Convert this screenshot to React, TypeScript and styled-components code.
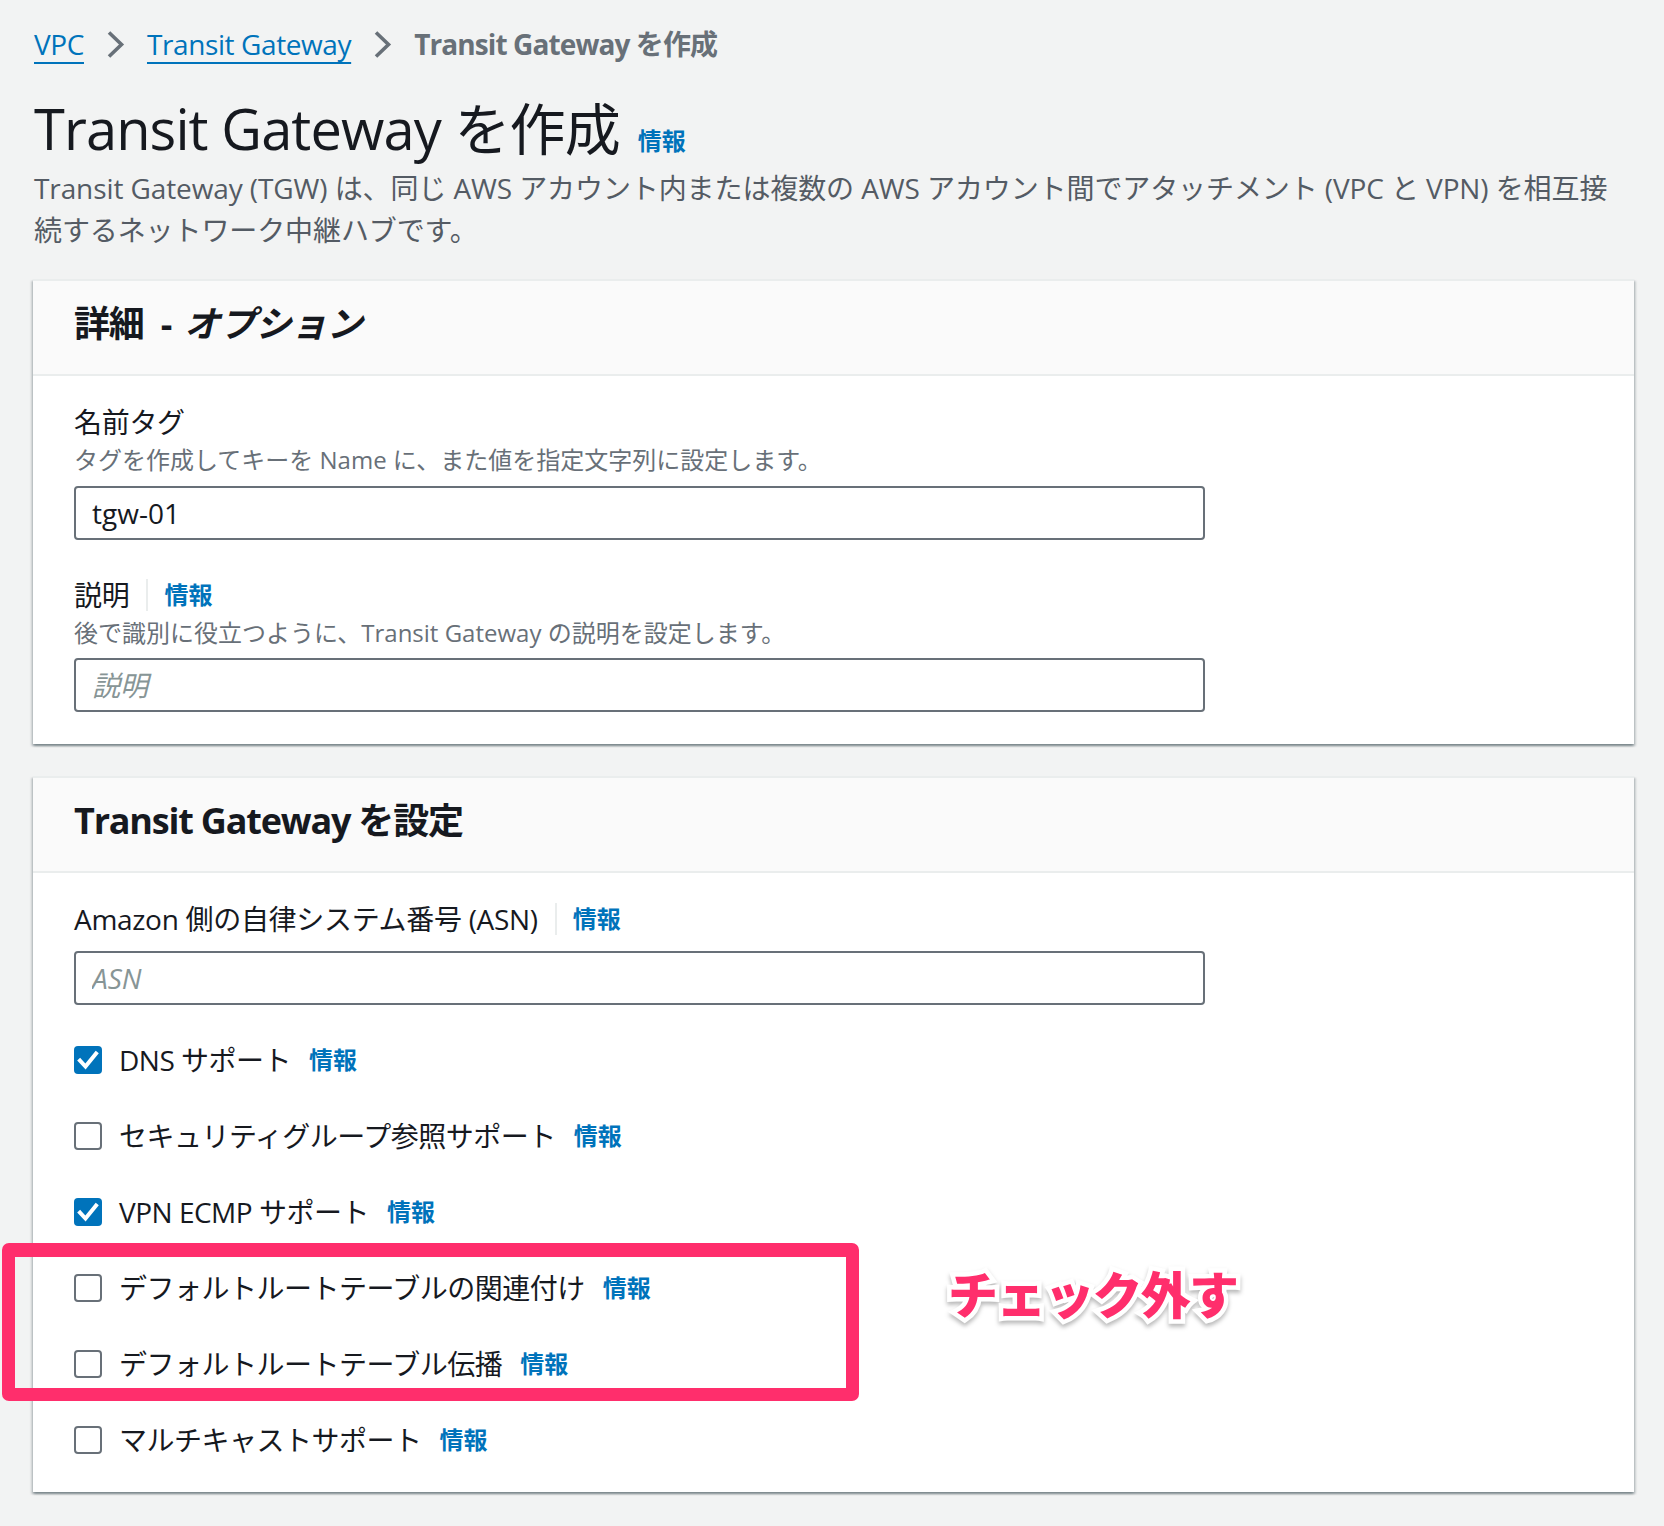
import React from "react";
import styled, { createGlobalStyle } from "styled-components";

const GlobalStyle = createGlobalStyle`
  html, body {
    margin: 0;
    padding: 0;
    background: #f2f3f3;
  }
  body {
    font-family: "Open Sans", "Noto Sans CJK JP", sans-serif;
    color: #16191f;
    -webkit-font-smoothing: antialiased;
  }
  * { box-sizing: border-box; }
`;

const Page = styled.div`
  min-height: 1526px;
  padding: 24px 30px 32px 33px;
`;

const Breadcrumbs = styled.nav`
  display: flex;
  align-items: center;
  gap: 22px;
  font-size: 28px;
  line-height: 40px;
  padding-left: 1px;
  letter-spacing: -0.4px;
`;

const CrumbLink = styled.a`
  color: #0073bb;
  text-decoration: underline;
  text-decoration-thickness: 2px;
  text-underline-offset: 7px;
  cursor: pointer;
`;

const CrumbCurrent = styled.span`
  color: #687078;
  font-weight: 700;
  letter-spacing: -0.9px;
`;

const ChevronSvg = styled.svg`
  width: 19px;
  height: 29px;
  flex: none;
`;

const Chevron = () => (
  <ChevronSvg viewBox="0 0 19 29">
    <polyline
      points="3,2.5 15.5,14.5 3,26.5"
      fill="none"
      stroke="#687078"
      strokeWidth="3.6"
      strokeLinejoin="miter"
    />
  </ChevronSvg>
);

const Title = styled.h1`
  margin: 30px 0 5px;
  font-size: 56px;
  line-height: 68px;
  font-weight: 400;
  color: #16191f;
  padding-left: 1px;
`;

const TitleText = styled.span`
  letter-spacing: -0.9px;
`;

const InfoLink = styled.a<{ $gap?: number }>`
  color: #0073bb;
  font-size: 24px;
  font-weight: 700;
  line-height: 32px;
  letter-spacing: 0;
  margin-left: ${(p) => p.$gap ?? 0}px;
  cursor: pointer;
  white-space: nowrap;
`;

const Description = styled.p`
  margin: 0;
  font-size: 28px;
  line-height: 42px;
  color: #545b64;
  padding-left: 1px;
  letter-spacing: -0.1px;
`;

const Cards = styled.div`
  display: flex;
  flex-direction: column;
  gap: 32px;
  margin-top: 28px;
`;

const Card = styled.section`
  background: #ffffff;
  border-top: 2px solid #eaeded;
  box-shadow: 0 2px 2px 0 rgba(0, 28, 36, 0.3), 2px 2px 2px 0 rgba(0, 28, 36, 0.15),
    -2px 2px 2px 0 rgba(0, 28, 36, 0.15);
`;

const CardHeader = styled.header`
  background: #fafafa;
  border-bottom: 2px solid #eaeded;
  padding: 19px 41px 26px;
`;

const HeaderTitle = styled.h2`
  margin: 0;
  font-size: 36px;
  line-height: 48px;
  font-weight: 700;
  color: #16191f;
  letter-spacing: -1.2px;
`;

const Dash = styled.span`
  margin: 0 5px 0 9px;
`;

const Optional = styled.i`
  font-style: italic;
  letter-spacing: -0.4px;
`;

const CardBody = styled.div<{ $bottom: number }>`
  padding: 26px 41px ${(p) => p.$bottom}px;
  display: flex;
  flex-direction: column;
  gap: 35px;
`;

const Field = styled.div`
  display: flex;
  flex-direction: column;
`;

const LabelRow = styled.div`
  display: flex;
  align-items: center;
  font-size: 28px;
  line-height: 40px;
  color: #16191f;
  letter-spacing: -0.3px;
`;

const Divider = styled.span`
  width: 0;
  height: 32px;
  border-left: 2px solid #eaeded;
  margin: 0 16px 0 17px;
`;

const Helper = styled.div`
  font-size: 24px;
  line-height: 32px;
  margin-top: 2px;
  color: #687078;
`;

const TextInput = styled.input<{ $gap: number }>`
  display: block;
  width: 1131px;
  height: 54px;
  margin-top: ${(p) => p.$gap}px;
  border: 2px solid #687078;
  border-radius: 4px;
  padding: 0 16px;
  font-family: "Open Sans", "Noto Sans CJK JP", sans-serif;
  font-size: 28px;
  color: #16191f;
  background: #ffffff;
  outline: none;
  &::placeholder {
    color: #879596;
    font-style: italic;
  }
`;

const CheckList = styled.div`
  display: flex;
  flex-direction: column;
  gap: 36px;
`;

const CheckRow = styled.label`
  display: flex;
  align-items: center;
  font-size: 28px;
  line-height: 40px;
  color: #16191f;
`;

const CheckText = styled.span`
  letter-spacing: -0.5px;
`;

const Box = styled.span<{ $checked: boolean }>`
  width: 28px;
  height: 28px;
  flex: none;
  border-radius: 4px;
  margin-right: 17px;
  display: flex;
  align-items: center;
  justify-content: center;
  background: ${(p) => (p.$checked ? "#0073bb" : "#ffffff")};
  border: ${(p) => (p.$checked ? "none" : "2px solid #687078")};
`;

const HighlightGroup = styled.div`
  position: relative;
  display: flex;
  flex-direction: column;
  gap: 36px;
`;

const Frame = styled.div`
  position: absolute;
  left: -72px;
  top: -25px;
  width: 857px;
  height: 158px;
  border: 13px solid #ff2e6c;
  border-top-width: 14px;
  border-radius: 7px;
  pointer-events: none;
`;

const Annotation = styled.div`
  position: absolute;
  left: 874px;
  top: -6px;
  font-family: "Noto Sans CJK JP", sans-serif;
  font-size: 50px;
  line-height: 60px;
  font-weight: 800;
  color: #ff2e6c;
  white-space: nowrap;
  -webkit-text-stroke: 9px #ffffff;
  paint-order: stroke fill;
  filter: drop-shadow(0 3px 2px rgba(0, 0, 0, 0.28));
  letter-spacing: -1.8px;
`;

const CheckMark = () => (
  <svg width="28" height="28" viewBox="0 0 28 28">
    <polyline
      points="6,14.5 11.5,20.5 22,7.5"
      fill="none"
      stroke="#ffffff"
      strokeWidth="4"
      strokeLinecap="square"
    />
  </svg>
);

type Opt = { label: string; checked: boolean };

const Check = ({ label, checked }: Opt) => (
  <CheckRow>
    <Box $checked={checked}>{checked && <CheckMark />}</Box>
    <CheckText>{label}</CheckText>
    <InfoLink $gap={18}>情報</InfoLink>
  </CheckRow>
);

export default function App() {
  return (
    <>
      <GlobalStyle />
      <Page>
        <Breadcrumbs>
          <CrumbLink>VPC</CrumbLink>
          <Chevron />
          <CrumbLink>Transit Gateway</CrumbLink>
          <Chevron />
          <CrumbCurrent>Transit Gateway を作成</CrumbCurrent>
        </Breadcrumbs>
        <Title>
          <TitleText>Transit Gateway を作成</TitleText>
          <InfoLink $gap={18}>情報</InfoLink>
        </Title>
        <Description>
          Transit Gateway (TGW) は、同じ AWS アカウント内または複数の AWS アカウント間でアタッチメント (VPC と VPN) を相互接続するネットワーク中継ハブです。
        </Description>
        <Cards>
          <Card>
            <CardHeader>
              <HeaderTitle>
                詳細<Dash> - </Dash>
                <Optional>オプション</Optional>
              </HeaderTitle>
            </CardHeader>
            <CardBody $bottom={32}>
              <Field>
                <LabelRow>名前タグ</LabelRow>
                <Helper>タグを作成してキーを Name に、また値を指定文字列に設定します。</Helper>
                <TextInput $gap={10} readOnly value="tgw-01" />
              </Field>
              <Field>
                <LabelRow>
                  説明
                  <Divider />
                  <InfoLink>情報</InfoLink>
                </LabelRow>
                <Helper>後で識別に役立つように、Transit Gateway の説明を設定します。</Helper>
                <TextInput $gap={9} readOnly placeholder="説明" />
              </Field>
            </CardBody>
          </Card>
          <Card>
            <CardHeader>
              <HeaderTitle>Transit Gateway を設定</HeaderTitle>
            </CardHeader>
            <CardBody $bottom={32}>
              <Field>
                <LabelRow>
                  Amazon 側の自律システム番号 (ASN)
                  <Divider />
                  <InfoLink>情報</InfoLink>
                </LabelRow>
                <TextInput $gap={12} readOnly placeholder="ASN" />
              </Field>
              <CheckList>
                <Check label="DNS サポート" checked />
                <Check label="セキュリティグループ参照サポート" checked={false} />
                <Check label="VPN ECMP サポート" checked />
                <HighlightGroup>
                  <Frame />
                  <Check label="デフォルトルートテーブルの関連付け" checked={false} />
                  <Check label="デフォルトルートテーブル伝播" checked={false} />
                  <Annotation>チェック外す</Annotation>
                </HighlightGroup>
                <Check label="マルチキャストサポート" checked={false} />
              </CheckList>
            </CardBody>
          </Card>
        </Cards>
      </Page>
    </>
  );
}
